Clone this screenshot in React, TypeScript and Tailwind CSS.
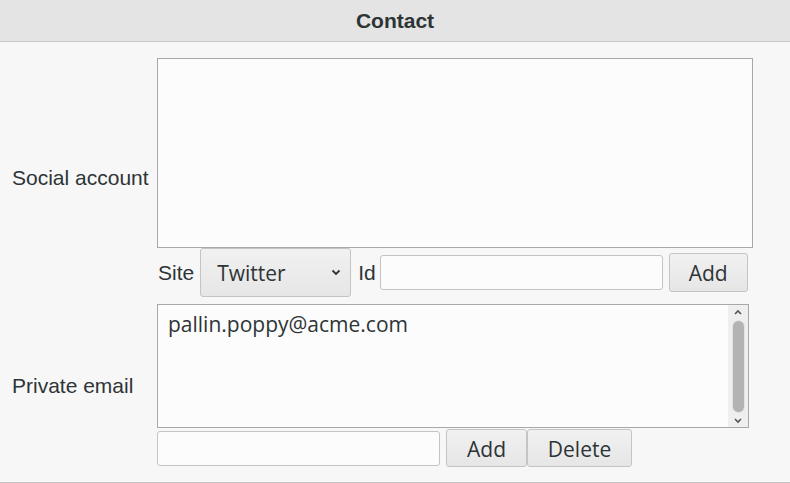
const btnBase =
  "flex items-center pt-[3px] rounded-[3px] border border-[#c4c4c4] bg-gradient-to-b from-[#f1f1f1] to-[#e6e6e6] text-[21px] text-[#2e3436] font-['Open_Sans',sans-serif]";

const field =
  "rounded-[3px] border border-[#c4c4c4] bg-[#fcfcfc] outline-none px-2 text-[21px] font-['Open_Sans',sans-serif]";

const App = () => {
  return (
    <div className="w-[790px] h-[483px] bg-[#f7f7f7] border-b border-[#c4c4c4] font-['Liberation_Sans',Arial,sans-serif] text-[#2e3436]">
      {/* header */}
      <div className="h-[42px] bg-[#e4e4e4] border-b border-[#c6c6c6] flex items-center justify-center text-[21px] font-bold">
        Contact
      </div>

      <div className="pt-[16px] flex flex-col">
        {/* Social account */}
        <div className="flex">
          <div className="w-[157px] pl-[12px] flex items-center text-[21px]">Social account</div>
          <div className="w-[596px] flex flex-col">
            <div className="h-[190px] border border-[#a8a8a8] bg-[#fcfcfc]" />
            <div className="h-[49px] flex items-center text-[21px]">
              <span className="ml-[1px]">Site</span>
              <div className={`${btnBase} justify-between ml-[6px] w-[151px] h-[49px] pl-[16px] pr-[9px]`}>
                <span>Twitter</span>
                <svg width="10" height="7" viewBox="0 0 10 7" className="-mt-[3px]">
                  <polyline points="1.5,1.5 5,5 8.5,1.5" fill="none" stroke="#2e3436" strokeWidth="1.8" />
                </svg>
              </div>
              <span className="ml-[7px]">Id</span>
              <input className={`${field} ml-[4px] w-[283px] h-[35px]`} />
              <button className={`${btnBase} justify-center ml-[6px] w-[79px] h-[39px]`}>Add</button>
            </div>
          </div>
        </div>

        {/* Private email */}
        <div className="flex mt-[7px]">
          <div className="w-[157px] pl-[12px] flex items-center text-[21px]">Private email</div>
          <div className="flex flex-col">
            <div className="w-[592px] h-[124px] border border-[#a8a8a8] bg-[#fcfcfc] flex">
              <div className="flex-1 pl-[10px] pt-[4px] text-[21px] font-['Open_Sans',sans-serif]">
                pallin.poppy@acme.com
              </div>
              <div className="w-[20px] bg-[#efefef] flex flex-col items-center">
                <svg width="10" height="8" viewBox="0 0 10 8" className="mt-[3px]">
                  <polyline points="2,6 5,3 8,6" fill="none" stroke="#555" strokeWidth="1.6" />
                </svg>
                <div className="mt-[5px] w-[11px] flex-1 rounded-full bg-[#b3b3b3] ring-1 ring-[#e2e2e2]" />
                <svg width="10" height="8" viewBox="0 0 10 8" className="mt-[5px] mb-[2px]">
                  <polyline points="2,2 5,5 8,2" fill="none" stroke="#555" strokeWidth="1.6" />
                </svg>
              </div>
            </div>
            <div className="flex items-center mt-[1px] h-[38px]">
              <input className={`${field} w-[283px] h-[35px]`} />
              <button className={`${btnBase} justify-center ml-[6px] w-[81px] h-[38px]`}>Add</button>
              <button className={`${btnBase} justify-center w-[105px] h-[38px]`}>Delete</button>
            </div>
          </div>
        </div>
      </div>
    </div>
  );
};

export default App;
